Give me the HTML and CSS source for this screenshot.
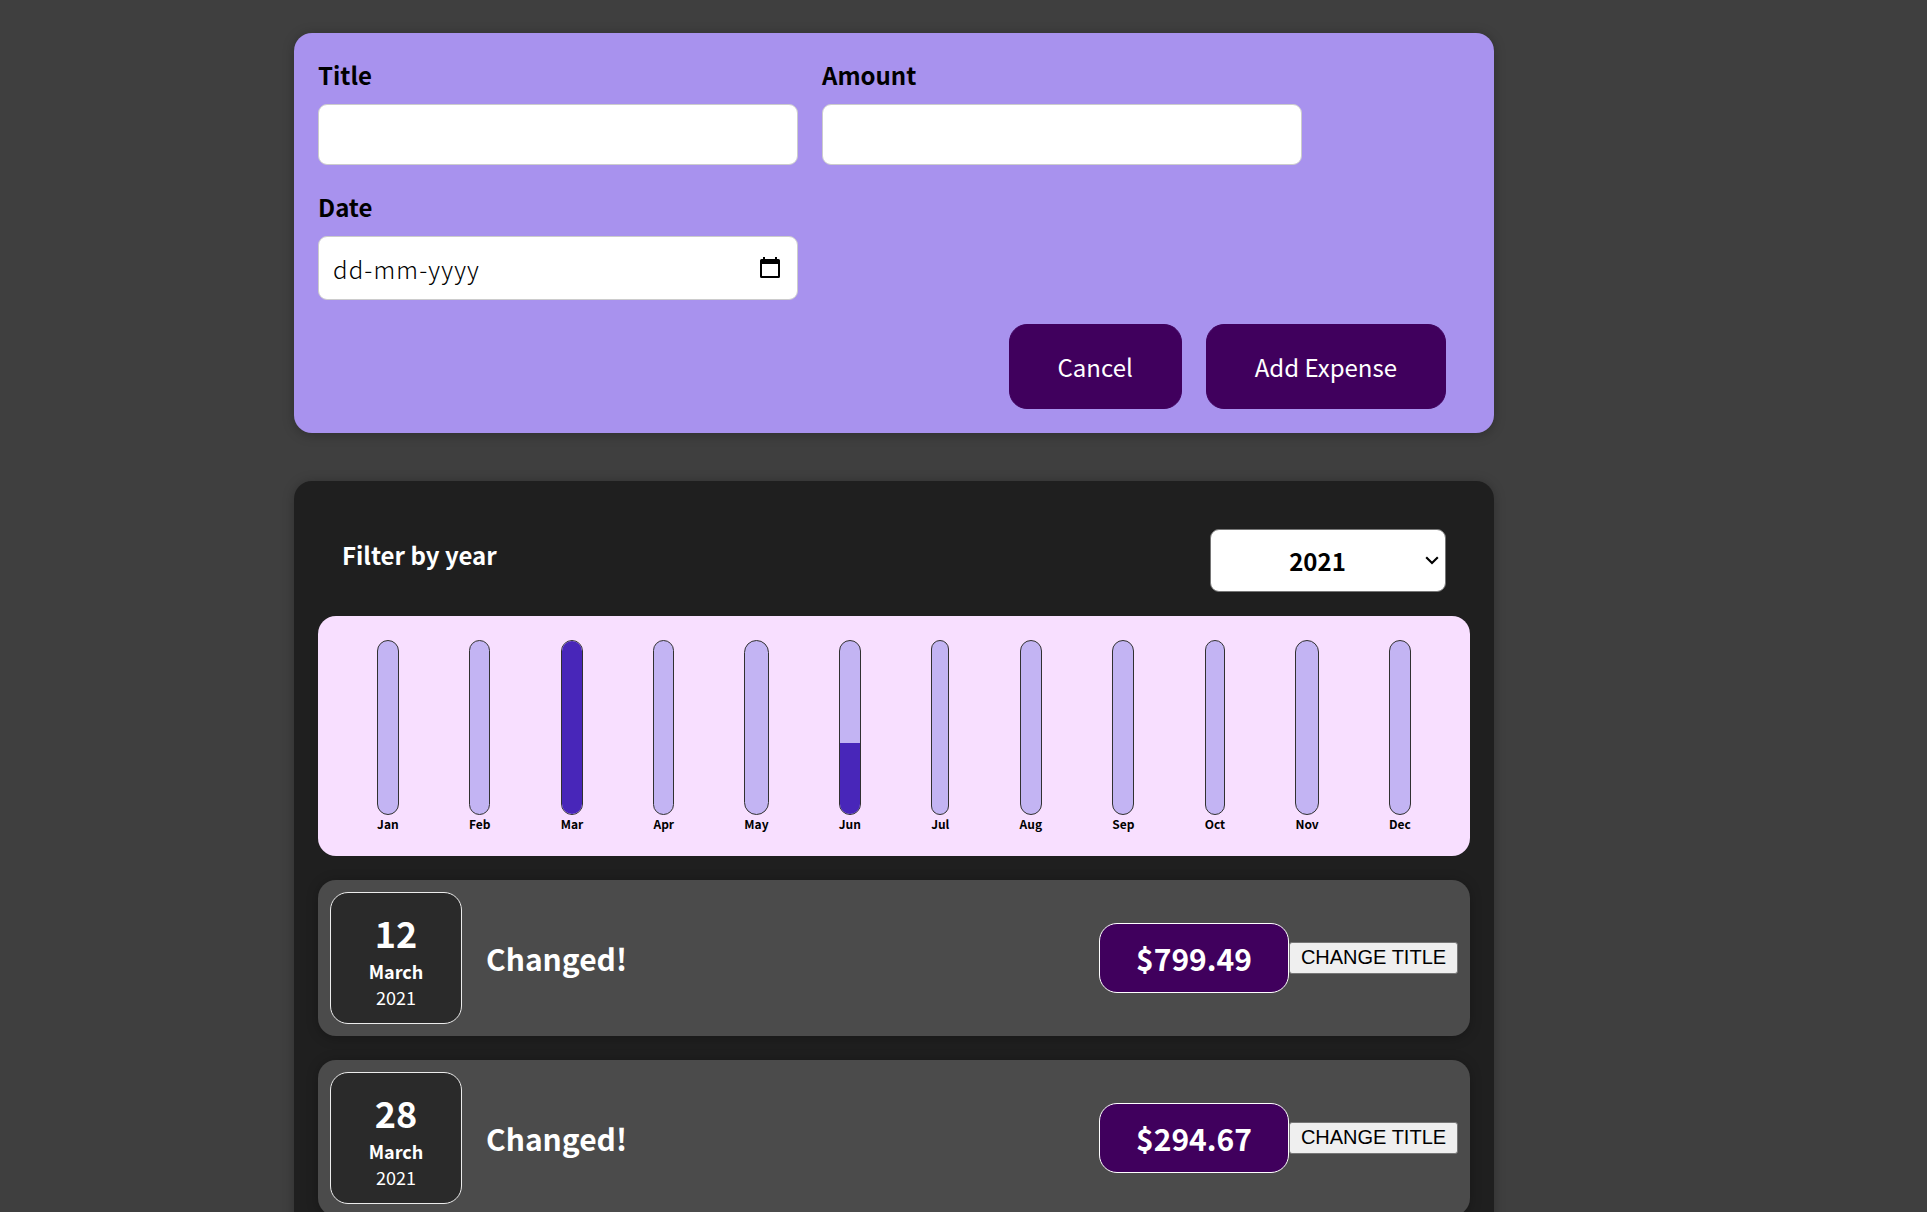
FILE: index.html
```html
<!DOCTYPE html>
<html lang="en">
<head>
<meta charset="utf-8">
<title>Expenses</title>
<link rel="stylesheet" href="styles.css">
</head>
<body>
<main class="app">
  <form class="new-expense">
    <div class="controls">
      <div class="control"><label for="title">Title</label><input id="title" class="field" type="text"></div>
      <div class="control"><label for="amount">Amount</label><input id="amount" class="field" type="text"></div>
      <div class="control"><label>Date</label>
        <div class="field field-date"><span class="date-text">dd-mm-yyyy</span>
          <svg class="calendar" viewBox="0 0 20 22" width="20" height="22"><path fill="#000" fill-rule="evenodd" d="M3 0h2v2h10V0h2v2h1.500a1.500 1.500 0 0 1 1.500 1.500v16a1.500 1.500 0 0 1-1.500 1.500H1.500a1.500 1.500 0 0 1-1.500-1.500V3.500a1.500 1.500 0 0 1 1.500-1.500H3zM2 7v12h16V7z"/></svg>
        </div>
      </div>
    </div>
    <div class="actions"><button type="button" class="btn btn-cancel">Cancel</button><button type="button" class="btn">Add Expense</button></div>
  </form>

  <section class="expenses">
    <div class="filter">
      <span class="filter-label">Filter by year</span>
      <div class="select"><span class="select-value">2021</span><svg class="chevron" width="14" height="9" viewBox="0 0 14 9"><path d="M1.2 1.2 7 7l5.8-5.8" fill="none" stroke="#000" stroke-width="2.1"/></svg></div>
    </div>
    <div class="chart">
      <div class="month"><div class="bar"></div><span class="month-label">Jan</span></div>
      <div class="month"><div class="bar"></div><span class="month-label">Feb</span></div>
      <div class="month"><div class="bar"><div class="fill" style="height:100%"></div></div><span class="month-label">Mar</span></div>
      <div class="month"><div class="bar"></div><span class="month-label">Apr</span></div>
      <div class="month"><div class="bar"></div><span class="month-label">May</span></div>
      <div class="month"><div class="bar"><div class="fill" style="height:41%"></div></div><span class="month-label">Jun</span></div>
      <div class="month"><div class="bar"></div><span class="month-label">Jul</span></div>
      <div class="month"><div class="bar"></div><span class="month-label">Aug</span></div>
      <div class="month"><div class="bar"></div><span class="month-label">Sep</span></div>
      <div class="month"><div class="bar"></div><span class="month-label">Oct</span></div>
      <div class="month"><div class="bar"></div><span class="month-label">Nov</span></div>
      <div class="month"><div class="bar"></div><span class="month-label">Dec</span></div>
    </div>
    <article class="item">
      <div class="date"><span class="day">12</span><span class="mon">March</span><span class="year">2021</span></div>
      <h2 class="name">Changed!</h2><div class="price">$799.49</div><button type="button" class="change">CHANGE TITLE</button>
    </article>
    <article class="item">
      <div class="date"><span class="day">28</span><span class="mon">March</span><span class="year">2021</span></div>
      <h2 class="name">Changed!</h2><div class="price">$294.67</div><button type="button" class="change">CHANGE TITLE</button>
    </article>
  </section>
</main>
</body>
</html>
```
FILE: styles.css
```css
* { box-sizing: border-box; }
html { font-size: 24px; overflow: hidden; }
body {
  margin: 0;
  height: 1212px;
  overflow: hidden;
  background: #3f3f3f;
  font-family: "Noto Sans CJK JP", sans-serif;
  line-height: 35px;
}
.app { width: 1200px; margin: 33px 0 0 294px; }

.new-expense {
  padding: 24px;
  border-radius: 18px;
  background: #a892ee;
  box-shadow: 0 1.5px 12px rgba(0, 0, 0, 0.25);
}
.controls { display: flex; flex-wrap: wrap; gap: 24px; }
.control { display: flex; flex-direction: column; width: 480px; }
.control label { margin-bottom: 12px; font-weight: 700; }
.field {
  width: 480px;
  height: 61px;
  padding: 12px;
  border: 1px solid #ccc;
  border-radius: 9px;
  background: #fff;
  font: inherit;
}
.field-date { display: flex; align-items: center; height: 64px; padding: 0 17px 0 14px; }
.date-text { flex: 1; color: #000; font-weight: 300; letter-spacing: 1.15px; padding-top: 1px; }
.actions { display: flex; justify-content: flex-end; gap: 24px; margin: 24px 24px 0 0; }
.btn {
  height: 85px;
  padding: 0 48px;
  border: 1px solid #40005d;
  border-radius: 18px;
  background: #40005d;
  color: #fff;
  font: inherit;
}
.btn-cancel { width: 173px; padding: 0; }

.expenses {
  margin-top: 48px;
  padding: 24px;
  border-radius: 18px;
  background: #1f1f1f;
  box-shadow: 0 1.5px 12px rgba(0, 0, 0, 0.25);
}
.filter { display: flex; align-items: center; justify-content: space-between; padding: 24px; }
.filter-label { color: #fff; font-weight: 700; margin-top: -12px; }
.select {
  display: flex;
  align-items: center;
  width: 236px;
  height: 63px;
  padding: 0 6px 0 0;
  border: 1px solid #767676;
  border-radius: 9px;
  background: #fff;
  font-weight: 700;
}
.select-value { flex: 1; padding-right: 1px; text-align: center; }

.chart {
  display: flex;
  justify-content: space-around;
  height: 240px;
  padding: 24px;
  border-radius: 18px;
  background: #f8dfff;
}
.month { display: flex; flex-direction: column; align-items: center; }
.bar {
  display: flex;
  flex: 1;
  flex-direction: column;
  justify-content: flex-end;
  width: 100%;
  overflow: hidden;
  border: 1px solid #313131;
  border-radius: 18px;
  background: #c3b4f3;
}
.fill { background: #4826b9; }
.month-label { font-size: 12px; line-height: 17px; font-weight: 700; }

.item {
  display: flex;
  align-items: center;
  height: 156px;
  margin-top: 24px;
  padding: 12px;
  border-radius: 18px;
  background: #4b4b4b;
  box-shadow: 0 1.5px 12px rgba(0, 0, 0, 0.25);
}
.date {
  display: flex;
  flex-direction: column;
  align-items: center;
  justify-content: center;
  width: 132px;
  height: 132px;
  border: 1px solid #ececec;
  border-radius: 18px;
  background: #2a2a2a;
  color: #fff;
}
.day { font-size: 36px; line-height: 52px; font-weight: 700; }
.mon { font-size: 18px; line-height: 26px; font-weight: 700; }
.year { font-size: 18px; line-height: 26px; }
.name { flex: 1; margin: 0 24px; color: #fff; font-size: 30px; }
.price {
  width: 190px;
  height: 70px;
  border: 1px solid #fff;
  border-radius: 18px;
  background: #40005d;
  color: #fff;
  font-size: 30px;
  font-weight: 700;
  line-height: 68px;
  text-align: center;
}
.change {
  width: 169px;
  height: 32px;
  padding: 0 0 1px;
  border: 1px solid #767676;
  border-radius: 3px;
  background: #efefef;
  color: #000;
  font: 20px "Liberation Sans", Arial, sans-serif;
}
```
